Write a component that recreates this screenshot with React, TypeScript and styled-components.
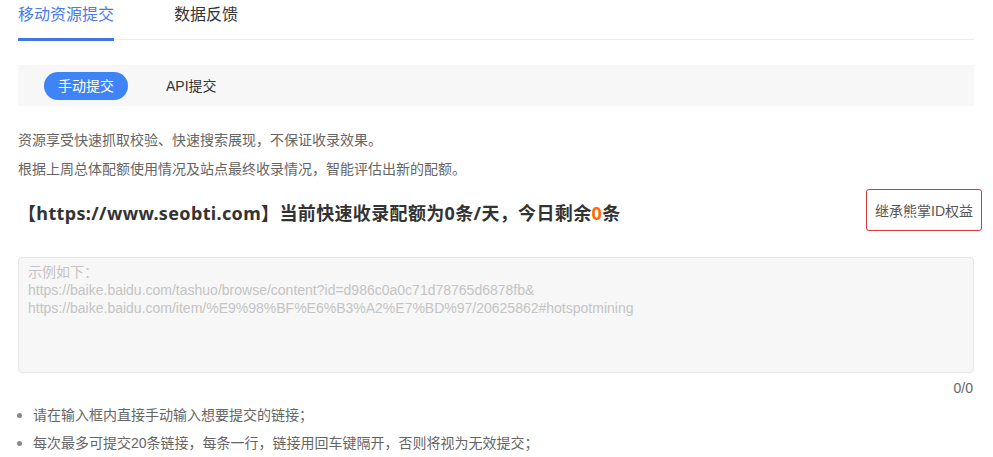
import React from 'react';
import styled, { createGlobalStyle } from 'styled-components';

const GlobalStyle = createGlobalStyle`
    body {
        margin: 0;
        background: #fff;
        font-family: "Liberation Sans", "Noto Sans CJK SC", sans-serif;
        color: #333;
    }
`;

const Page = styled.div`
    width: 956px;
    padding: 0 18px;
`;

const Tabs = styled.div`
    display: flex;
    height: 39px;
    border-bottom: 1px solid #ececec;
    column-gap: 60px;
`;

const Tab = styled.div<{ $active?: boolean }>`
    position: relative;
    font-size: 16px;
    line-height: 30px;
    color: ${(p) => (p.$active ? '#4a7be8' : '#333')};
    &::after {
        content: '';
        display: ${(p) => (p.$active ? 'block' : 'none')};
        position: absolute;
        left: 0;
        right: 0;
        bottom: -2px;
        height: 3px;
        background: #3f78e6;
    }
`;

const SubBar = styled.div`
    margin-top: 25px;
    height: 41px;
    background: #f7f7f7;
    display: flex;
    align-items: center;
    padding-left: 26px;
    column-gap: 38px;
`;

const Pill = styled.div<{ $active?: boolean }>`
    height: 28px;
    line-height: 28px;
    padding: 0 ${(p) => (p.$active ? '14px' : '0')};
    border-radius: 14px;
    font-size: 14px;
    color: ${(p) => (p.$active ? '#fff' : '#333')};
    background: ${(p) => (p.$active ? '#3f84f6' : 'transparent')};
`;

const Notes = styled.div`
    margin-top: 20px;
    font-size: 14px;
    line-height: 29px;
    color: #666;
`;

const HeadRow = styled.div`
    margin-top: 5px;
    margin-right: -8px;
    display: flex;
    align-items: center;
    justify-content: space-between;
    height: 42px;
`;

const Heading = styled.h2`
    margin: 0;
    padding-top: 4px;
    font-family: "Noto Sans", "Noto Sans CJK SC", sans-serif;
    font-size: 18px;
    font-weight: bold;
    letter-spacing: 0.35px;
    color: #333;
`;

const Orange = styled.span`
    color: #ff6a00;
`;

const InheritButton = styled.button`
    height: 42px;
    width: 116px;
    border: 1px solid #d33a3a;
    border-radius: 3px;
    background: #fff;
    font-family: "Liberation Sans", "Noto Sans CJK SC", sans-serif;
    font-size: 14px;
    color: #555;
    padding: 0;
`;

const Input = styled.div`
    margin-top: 26px;
    height: 116px;
    box-sizing: border-box;
    background: #f7f7f7;
    border: 1px solid #e6e6e6;
    border-radius: 4px;
    padding: 5px 9px;
    font-size: 14px;
    line-height: 18px;
    color: #c4c4c4;
`;

const Counter = styled.div`
    text-align: right;
    font-size: 14px;
    line-height: 18px;
    margin-top: 6px;
    padding-right: 1px;
    color: #666;
`;

const Tips = styled.ul`
    margin: 4px 0 0;
    padding: 0 0 0 15px;
    font-size: 14px;
    line-height: 27px;
    color: #666;
    li::marker {
        color: #888;
        font-size: 16px;
    }
`;

export default function App() {
    return (
        <Page>
            <GlobalStyle />
            <Tabs>
                <Tab $active>移动资源提交</Tab>
                <Tab>数据反馈</Tab>
            </Tabs>
            <SubBar>
                <Pill $active>手动提交</Pill>
                <Pill>API提交</Pill>
            </SubBar>
            <Notes>
                <div>资源享受快速抓取校验、快速搜索展现，不保证收录效果。</div>
                <div>根据上周总体配额使用情况及站点最终收录情况，智能评估出新的配额。</div>
            </Notes>
            <HeadRow>
                <Heading>
                    【https://www.seobti.com】当前快速收录配额为0条/天，今日剩余<Orange>0</Orange>条
                </Heading>
                <InheritButton>继承熊掌ID权益</InheritButton>
            </HeadRow>
            <Input>
                <div>示例如下：</div>
                <div>https://baike.baidu.com/tashuo/browse/content?id=d986c0a0c71d78765d6878fb&amp;</div>
                <div>https://baike.baidu.com/item/%E9%98%BF%E6%B3%A2%E7%BD%97/20625862#hotspotmining</div>
            </Input>
            <Counter>0/0</Counter>
            <Tips>
                <li>请在输入框内直接手动输入想要提交的链接；</li>
                <li>每次最多可提交20条链接，每条一行，链接用回车键隔开，否则将视为无效提交；</li>
            </Tips>
        </Page>
    );
}
